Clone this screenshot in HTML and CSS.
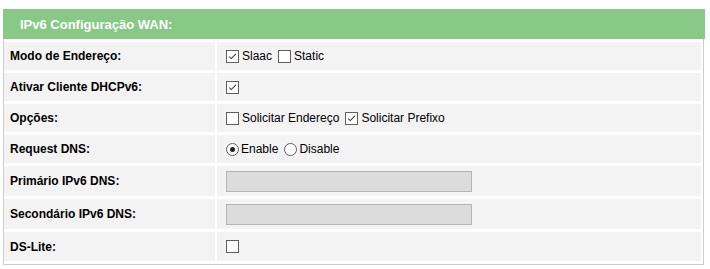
FILE: index.html
```html
<!DOCTYPE html>
<html lang="pt">
<head>
<meta charset="utf-8">
<title>IPv6 Configuração WAN</title>
<link rel="stylesheet" href="styles.css">
</head>
<body>
<div class="panel">
  <div class="panel-head">IPv6 Configuração WAN:</div>
  <div class="panel-body">
    <div class="lbl r28">Modo de Endereço:</div>
    <div class="val r28">
      <span class="opt"><span class="cb on"><svg viewBox="0 0 13 13"><path d="M2.5 6.5 L5 9 L10.5 3.5"/></svg></span>Slaac</span>
      <span class="opt"><span class="cb"></span>Static</span>
    </div>

    <div class="lbl r28">Ativar Cliente DHCPv6:</div>
    <div class="val r28">
      <span class="opt"><span class="cb on"><svg viewBox="0 0 13 13"><path d="M2.5 6.5 L5 9 L10.5 3.5"/></svg></span></span>
    </div>

    <div class="lbl r28">Opções:</div>
    <div class="val r28">
      <span class="opt"><span class="cb"></span>Solicitar Endereço</span>
      <span class="opt"><span class="cb on"><svg viewBox="0 0 13 13"><path d="M2.5 6.5 L5 9 L10.5 3.5"/></svg></span>Solicitar Prefixo</span>
    </div>

    <div class="lbl r28">Request DNS:</div>
    <div class="val r28">
      <span class="opt"><span class="rb on"></span>Enable</span>
      <span class="opt"><span class="rb"></span>Disable</span>
    </div>

    <div class="lbl r30">Primário IPv6 DNS:</div>
    <div class="val r30"><input class="txt" type="text" disabled></div>

    <div class="lbl r30">Secondário IPv6 DNS:</div>
    <div class="val r30"><input class="txt" type="text" disabled></div>

    <div class="lbl r29">DS-Lite:</div>
    <div class="val r29"><span class="opt"><span class="cb"></span></span></div>
  </div>
</div>
</body>
</html>
```
FILE: styles.css
```css
* { box-sizing: border-box; }
body {
  margin: 0;
  padding: 9px 0 0 3px;
  background: #fff;
  font-family: "Liberation Sans", Arial, sans-serif;
  font-size: 12px;
  color: #000;
}
.panel { width: 701px; }
.panel-head {
  height: 30px;
  background: #88c987;
  color: #fff;
  font-weight: bold;
  font-size: 13px;
  display: flex;
  align-items: center;
  padding-left: 17px;
  width: 702px;
}
.panel-body {
  border: 1px solid #cccccc;
  border-top: none;
  padding: 3px 2px 3px 0;
  display: grid;
  grid-template-columns: 211px 484px;
  column-gap: 2px;
  row-gap: 3px;
}
.lbl, .val {
  background: #f3f3f3;
  display: flex;
  align-items: center;
}
.lbl { font-weight: bold; padding-left: 6px; }
.val { padding-left: 9px; }
.r28 { height: 28px; }
.r30 { height: 30px; }
.r29 { height: 29px; }
.opt {
  display: inline-flex;
  align-items: center;
  margin-right: 6px;
}
.cb {
  width: 13px;
  height: 13px;
  border: 1px solid #5e5e5e;
  background: #fff;
  margin-right: 3px;
  display: inline-flex;
}
.cb svg { width: 11px; height: 11px; }
.cb svg path { fill: none; stroke: #333; stroke-width: 1.2; }
.rb {
  width: 13px;
  height: 13px;
  border: 1px solid #5e5e5e;
  border-radius: 50%;
  background: #fff;
  margin-right: 2px;
  display: inline-flex;
  align-items: center;
  justify-content: center;
}
.rb.on::after {
  content: "";
  width: 5px;
  height: 5px;
  border-radius: 50%;
  background: #222;
}
.txt {
  width: 246px;
  height: 21px;
  background: #dcdcdc;
  border: 1px solid #b5b5b5;
  margin: 0;
  padding: 0;
}
```
